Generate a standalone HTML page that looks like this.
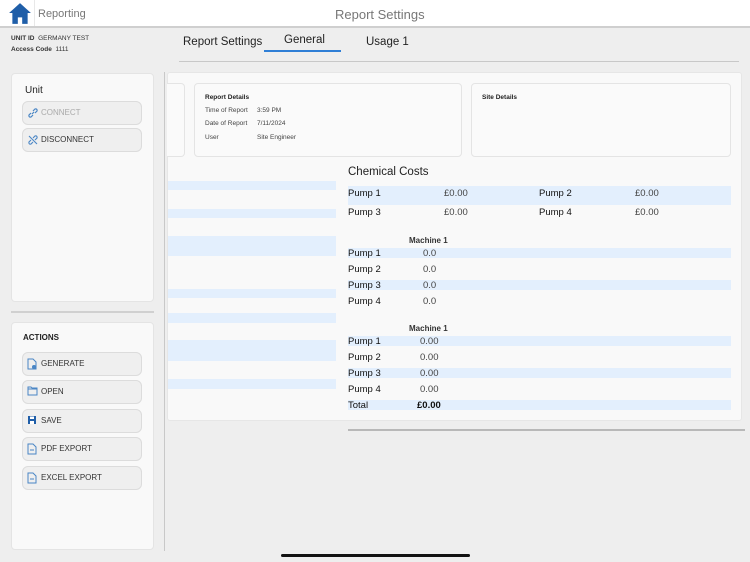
<!DOCTYPE html>
<html><head><meta charset="utf-8"><style>
*{margin:0;padding:0;box-sizing:border-box}
body{width:750px;height:562px;overflow:hidden;background:#eeeeee;font-family:"Liberation Sans",sans-serif;position:relative;color:#222}
.a{position:absolute}
.top{left:0;top:0;width:750px;height:28px;background:#fff;border-bottom:2px solid #cfcfcf}
.panel{background:#f9f9f9;border:1px solid #e4e4e4;border-radius:4px}
.btn{position:absolute;left:22px;width:120px;height:24px;background:#efefef;border:1px solid #dcdcdc;border-radius:6px;font-size:8px;line-height:22px;padding-left:18px;color:#333}
.btn svg{position:absolute;left:4px;top:5px}
.hl{background:#e3effd}
.t{font-size:9.5px;color:#111}
.b{font-weight:bold}
</style></head><body>
<div class="a top"></div>
<svg class="a" style="left:8px;top:2px" width="24" height="23" viewBox="0 0 22 21"><path d="M11 1 L1 10 H4 V20 H9 V14 H13 V20 H18 V10 H21 Z" fill="#1f5ea8"/></svg>
<div class="a" style="left:34px;top:0;width:1px;height:26px;background:#e8e8e8"></div>
<div class="a" style="left:38px;top:8px;font-size:11px;color:#777">Reporting</div>
<div class="a" style="left:335px;top:7px;font-size:13px;color:#777">Report Settings</div>
<div class="a" style="left:11px;top:35px;font-size:6.5px;color:#333"><b>UNIT ID</b>&nbsp; GERMANY TEST</div>
<div class="a" style="left:11px;top:46px;font-size:6.5px;color:#333"><b>Access Code</b>&nbsp; 1111</div>
<div class="a" style="left:183px;top:36px;font-size:11.5px;color:#222">Report Settings</div>
<div class="a" style="left:284px;top:34px;font-size:11.5px;color:#222">General</div>
<div class="a" style="left:264px;top:50px;width:77px;height:2px;background:#2f7fd6"></div>
<div class="a" style="left:366px;top:36px;font-size:11.5px;color:#222">Usage 1</div>
<div class="a" style="left:179px;top:61px;width:560px;height:1px;background:#c8c8c8"></div>

<div class="a panel" style="left:11px;top:73px;width:143px;height:229px"></div>
<div class="a" style="left:25px;top:85px;font-size:10px">Unit</div>
<div class="btn" style="top:101px;color:#aaa"><svg width="12" height="12" viewBox="0 0 12 12"><path d="M5 7 L7 5 M4 6 L2 8 A1.5 1.5 0 0 0 4 10 L6 8 M8 6 L10 4 A1.5 1.5 0 0 0 8 2 L6 4" stroke="#4a86c5" fill="none" stroke-width="1.2"/></svg>CONNECT</div>
<div class="btn" style="top:128px"><svg width="12" height="12" viewBox="0 0 12 12"><path d="M4 6 L2 8 A1.5 1.5 0 0 0 4 10 L6 8 M8 6 L10 4 A1.5 1.5 0 0 0 8 2 L6 4 M2 2 L10 10" stroke="#4a86c5" fill="none" stroke-width="1.1"/></svg>DISCONNECT</div>
<div class="a" style="left:11px;top:311px;width:143px;height:2px;background:#d0d0d0"></div>
<div class="a panel" style="left:11px;top:322px;width:143px;height:228px"></div>
<div class="a b" style="left:23px;top:333px;font-size:8px">ACTIONS</div>
<div class="btn" style="top:352px"><svg width="10" height="12" viewBox="0 0 10 12"><path d="M1 1H6L9 4V11H1Z" fill="none" stroke="#4a86c5"/><circle cx="7" cy="9" r="2" fill="#4a86c5"/></svg>GENERATE</div>
<div class="btn" style="top:380px"><svg width="11" height="10" viewBox="0 0 11 10"><path d="M1 1H4L5 2H10V9H1Z" fill="none" stroke="#4a86c5"/><path d="M1 3H10" stroke="#4a86c5"/></svg>OPEN</div>
<div class="btn" style="top:409px"><svg width="10" height="10" viewBox="0 0 10 10"><rect x="1" y="1" width="8" height="8" fill="#1f5ea8"/><rect x="3" y="1.5" width="4" height="2.5" fill="#fff"/><rect x="3" y="6" width="4" height="3" fill="#fff"/></svg>SAVE</div>
<div class="btn" style="top:437px"><svg width="10" height="12" viewBox="0 0 10 12"><path d="M1 1H6L9 4V11H1Z" fill="none" stroke="#4a86c5"/><path d="M3 7H7" stroke="#4a86c5"/></svg>PDF EXPORT</div>
<div class="btn" style="top:466px"><svg width="10" height="12" viewBox="0 0 10 12"><path d="M1 1H6L9 4V11H1Z" fill="none" stroke="#4a86c5"/><path d="M3 7H7" stroke="#4a86c5"/></svg>EXCEL EXPORT</div>
<div class="a" style="left:164px;top:72px;width:1px;height:479px;background:#c8c8c8"></div>

<div class="a" style="left:167px;top:72px;width:575px;height:349px;background:#f9f9f9;border:1px solid #e6e6e6;border-radius:3px"></div>
<div class="a" style="left:167px;top:83px;width:18px;height:74px;background:#fafafa;border:1px solid #e4e4e4;border-left:none;border-radius:0 4px 4px 0"></div>
<div class="a panel" style="left:194px;top:83px;width:268px;height:74px;background:#fafafa"></div>
<div class="a b" style="left:205px;top:94px;font-size:6.5px">Report Details</div>
<div class="a" style="left:205px;top:107px;font-size:6.5px;color:#444">Time of Report</div><div class="a" style="left:257px;top:107px;font-size:6.5px;color:#444">3:59 PM</div>
<div class="a" style="left:205px;top:120px;font-size:6.5px;color:#444">Date of Report</div><div class="a" style="left:257px;top:120px;font-size:6.5px;color:#444">7/11/2024</div>
<div class="a" style="left:205px;top:134px;font-size:6.5px;color:#444">User</div><div class="a" style="left:257px;top:134px;font-size:6.5px;color:#444">Site Engineer</div>
<div class="a panel" style="left:471px;top:83px;width:260px;height:74px;background:#fafafa"></div>
<div class="a b" style="left:482px;top:94px;font-size:6.5px">Site Details</div>

<div class="a hl" style="left:168px;top:181px;width:168px;height:9px"></div>
<div class="a hl" style="left:168px;top:209px;width:168px;height:9px"></div>
<div class="a hl" style="left:168px;top:236px;width:168px;height:20px"></div>
<div class="a hl" style="left:168px;top:289px;width:168px;height:9px"></div>
<div class="a hl" style="left:168px;top:313px;width:168px;height:10px"></div>
<div class="a hl" style="left:168px;top:340px;width:168px;height:21px"></div>
<div class="a hl" style="left:168px;top:379px;width:168px;height:10px"></div>

<div class="a" style="left:348px;top:166px;font-size:11.5px;color:#222">Chemical Costs</div>
<div class="a hl" style="left:348px;top:186px;width:383px;height:19px"></div>
<div class="a t" style="left:348px;top:188px">Pump 1</div><div class="a t" style="left:444px;top:188px;color:#444">£0.00</div>
<div class="a t" style="left:539px;top:188px">Pump 2</div><div class="a t" style="left:635px;top:188px;color:#444">£0.00</div>
<div class="a t" style="left:348px;top:207px">Pump 3</div><div class="a t" style="left:444px;top:207px;color:#444">£0.00</div>
<div class="a t" style="left:539px;top:207px">Pump 4</div><div class="a t" style="left:635px;top:207px;color:#444">£0.00</div>

<div class="a b" style="left:409px;top:236px;font-size:8px;color:#333">Machine 1</div>
<div class="a hl" style="left:348px;top:248px;width:383px;height:10px"></div>
<div class="a t" style="left:348px;top:248px">Pump 1</div><div class="a t" style="left:423px;top:248px;color:#444">0.0</div>
<div class="a t" style="left:348px;top:264px">Pump 2</div><div class="a t" style="left:423px;top:264px;color:#444">0.0</div>
<div class="a hl" style="left:348px;top:280px;width:383px;height:10px"></div>
<div class="a t" style="left:348px;top:280px">Pump 3</div><div class="a t" style="left:423px;top:280px;color:#444">0.0</div>
<div class="a t" style="left:348px;top:296px">Pump 4</div><div class="a t" style="left:423px;top:296px;color:#444">0.0</div>

<div class="a b" style="left:409px;top:324px;font-size:8px;color:#333">Machine 1</div>
<div class="a hl" style="left:348px;top:336px;width:383px;height:10px"></div>
<div class="a t" style="left:348px;top:336px">Pump 1</div><div class="a t" style="left:420px;top:336px;color:#444">0.00</div>
<div class="a t" style="left:348px;top:352px">Pump 2</div><div class="a t" style="left:420px;top:352px;color:#444">0.00</div>
<div class="a hl" style="left:348px;top:368px;width:383px;height:10px"></div>
<div class="a t" style="left:348px;top:368px">Pump 3</div><div class="a t" style="left:420px;top:368px;color:#444">0.00</div>
<div class="a t" style="left:348px;top:384px">Pump 4</div><div class="a t" style="left:420px;top:384px;color:#444">0.00</div>
<div class="a hl" style="left:348px;top:400px;width:383px;height:10px"></div>
<div class="a t" style="left:348px;top:400px">Total</div><div class="a t b" style="left:417px;top:400px">£0.00</div>
<div class="a" style="left:348px;top:429px;width:397px;height:2px;background:#b8b8b8"></div>

<div class="a" style="left:281px;top:554px;width:189px;height:3px;border-radius:2px;background:#111"></div>
</body></html>
